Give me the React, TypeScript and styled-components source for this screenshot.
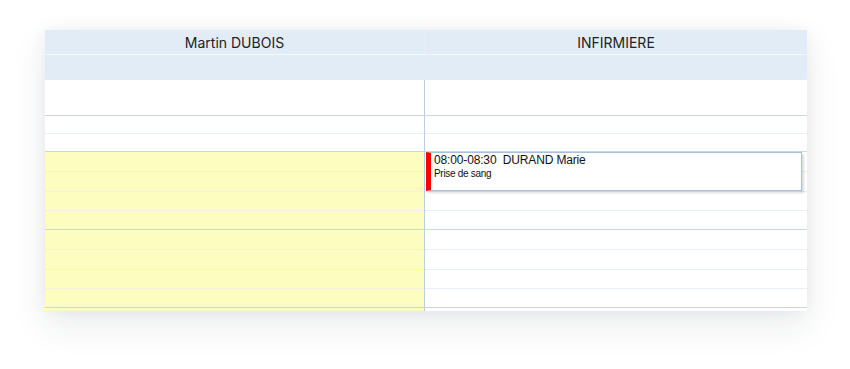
import React from 'react';
import styled, { createGlobalStyle } from 'styled-components';

const GlobalStyle = createGlobalStyle`
    body {
        margin: 0;
        background: #ffffff;
        font-family: Inter, 'Liberation Sans', sans-serif;
    }
`;

const Page = styled.div`
    padding: 30px 43px 0 45px;
    height: 369px;
    box-sizing: border-box;
`;

const Card = styled.div`
    height: 281px;
    overflow: hidden;
    background: #ffffff;
    box-shadow: 0 14px 34px rgba(30, 40, 60, 0.09), 0 0 16px rgba(30, 40, 60, 0.05);
`;

const HeaderRow = styled.div`
    display: grid;
    grid-template-columns: 380px 1fr;
    height: 24px;
    background: #e2ecf7;
    border-bottom: 1px solid #f4f8fc;
`;

const HeaderCell = styled.div<{ $divider?: boolean }>`
    display: flex;
    align-items: center;
    justify-content: center;
    font-size: 14px;
    color: #222;
    ${ p => p.$divider ? 'border-right: 1px solid #e6eef8;' : '' }
`;

const SubHeader = styled.div`
    height: 25px;
    background: #e2ecf7;
`;

const Body = styled.div`
    position: relative;
    display: grid;
    grid-template-columns: 380px 1fr;
`;

const Column = styled.div<{ $divider?: boolean }>`
    display: flex;
    flex-direction: column;
    ${ p => p.$divider ? 'border-right: 1px solid #b9cde8;' : '' }
`;

const Slot = styled.div<{ $h: number; $hour?: boolean; $busy?: boolean }>`
    height: ${ p => p.$h }px;
    box-sizing: border-box;
    flex-shrink: 0;
    background: ${ p => p.$busy ? '#fefdc0' : '#ffffff' };
    border-bottom: 1px solid ${ p => p.$hour ? '#c6d6ec' : p.$busy ? '#f1f1e2' : '#e9eff7' };
`;

const Event = styled.div`
    position: absolute;
    top: 72px;
    left: 381px;
    width: 376px;
    height: 39px;
    box-sizing: border-box;
    background: #ffffff;
    border: 1px solid #a9bfdd;
    border-left: 5px solid #ff0000;
    box-shadow: 2px 2px 2px rgba(0, 0, 0, 0.14);
    padding: 1px 0 0 3px;
    font-family: 'Liberation Sans', Arial, sans-serif;
    color: #111;
`;

const EventTitle = styled.div`
    font-size: 12px;
    line-height: 13px;
    letter-spacing: -0.15px;
    white-space: pre;
`;

const EventText = styled.div`
    font-size: 10px;
    line-height: 14px;
    letter-spacing: -0.3px;
`;

const slots = [
    { h: 36, hour: true },
    { h: 18 },
    { h: 18, hour: true },
    { h: 20 },
    { h: 20 },
    { h: 19 },
    { h: 19, hour: true },
    { h: 20 },
    { h: 20 },
    { h: 19 },
    { h: 19, hour: true },
    { h: 20 },
    { h: 20 },
];

const App = () => {

    return (
        <Page>
            <GlobalStyle />
            <Card>
                <HeaderRow>
                    <HeaderCell $divider>Martin DUBOIS</HeaderCell>
                    <HeaderCell>INFIRMIERE</HeaderCell>
                </HeaderRow>
                <SubHeader />
                <Body>
                    <Column $divider>
                        { slots.map((s, key) => (
                            <Slot key={ key } $h={ s.h } $hour={ s.hour } $busy={ key >= 3 } />
                        ))}
                    </Column>
                    <Column>
                        { slots.map((s, key) => (
                            <Slot key={ key } $h={ s.h } $hour={ s.hour } />
                        ))}
                    </Column>
                    <Event>
                        <EventTitle>08:00-08:30  DURAND Marie</EventTitle>
                        <EventText>Prise de sang</EventText>
                    </Event>
                </Body>
            </Card>
        </Page>
    );
}

export default App;
